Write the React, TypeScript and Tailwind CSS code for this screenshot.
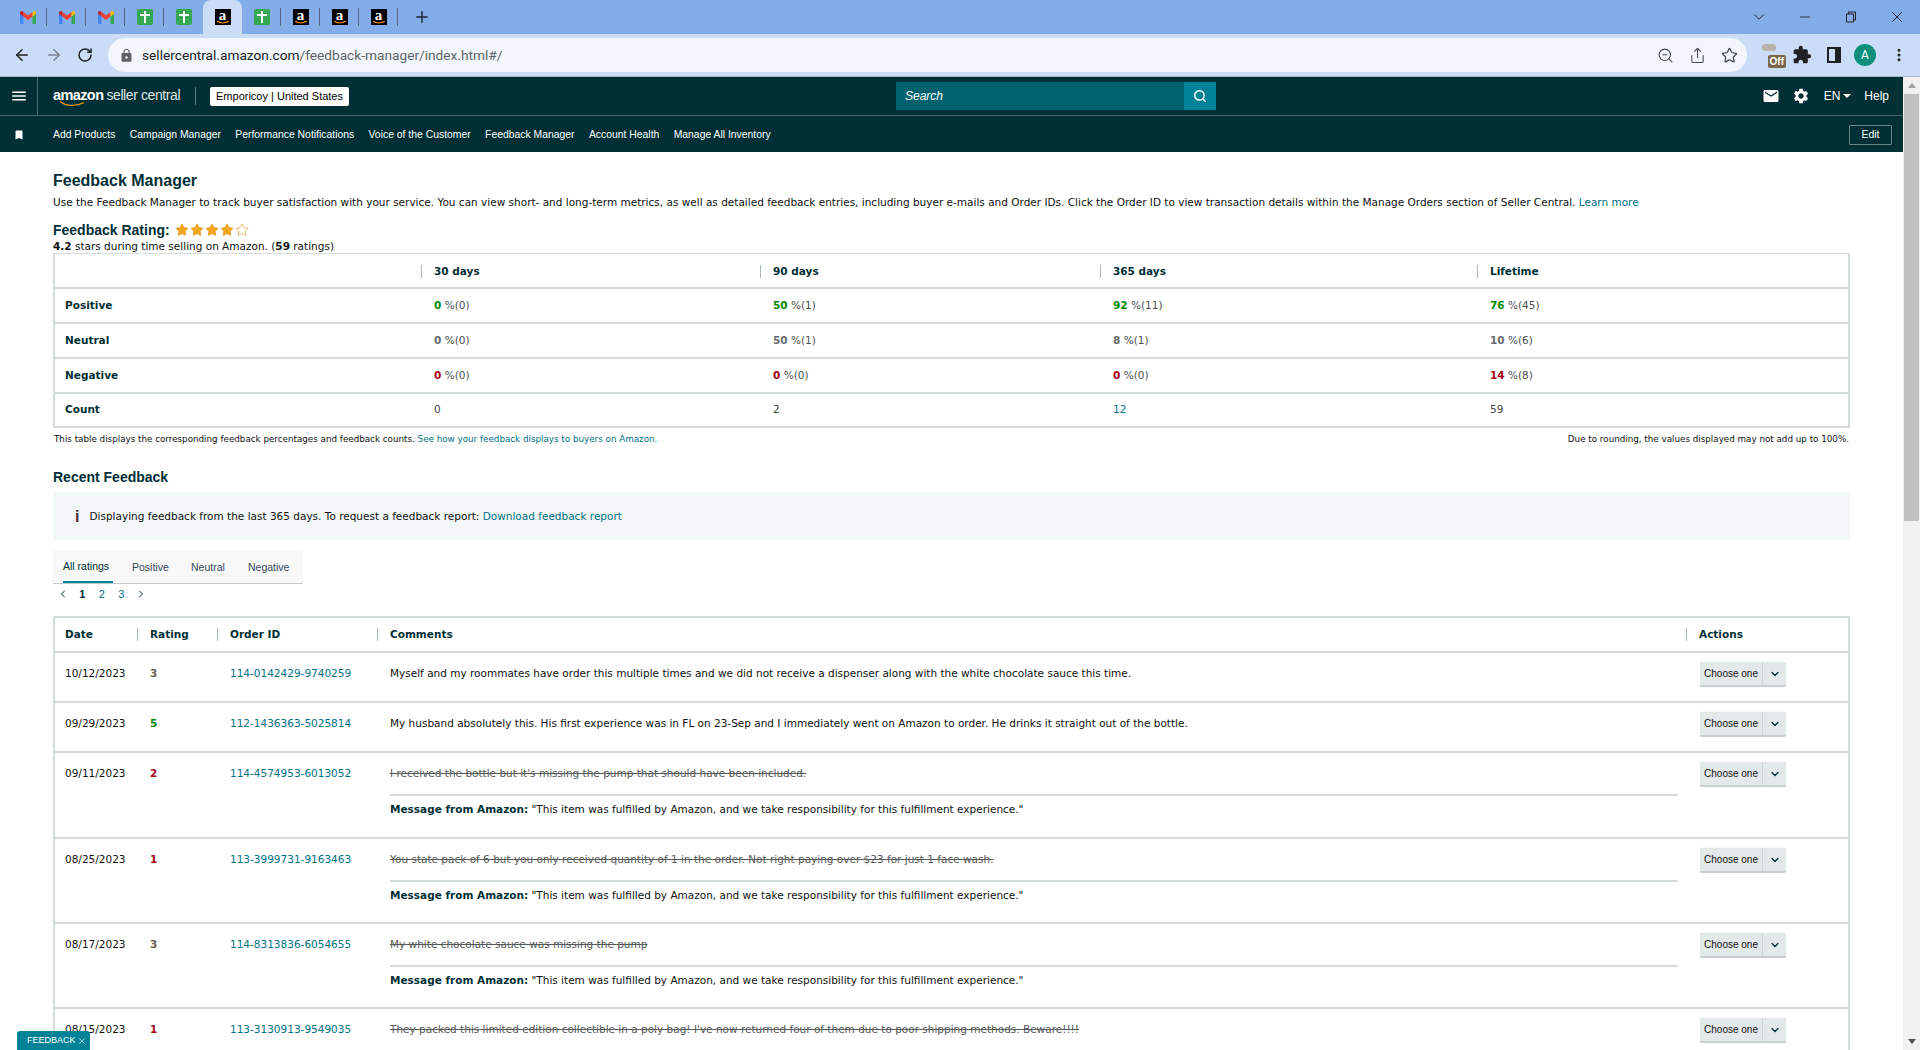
import { ArrowLeft, ArrowRight, RotateCw, ZoomOut, Share, Star, MoreVertical, Plus, ChevronDown, ChevronLeft, ChevronRight, Minus, X, Search } from "lucide-react";
import { MdBookmark, MdExtension, MdLock, MdMail, MdMenu, MdSettings } from "react-icons/md";

const body = "font-['DejaVu_Sans',Verdana,sans-serif]";
const arial = "font-['Liberation_Sans',Arial,sans-serif]";

const GMAIL = "gmail";
const SHEET = "sheet";
const AMZ = "amazon";

const tabs = [
  { icon: GMAIL, sep: true },
  { icon: GMAIL, sep: true },
  { icon: GMAIL, sep: true },
  { icon: SHEET, sep: true },
  { icon: SHEET, sep: false },
  { icon: AMZ, active: true, sep: false },
  { icon: SHEET, sep: true },
  { icon: AMZ, sep: true },
  { icon: AMZ, sep: true },
  { icon: AMZ, sep: true },
];

const navLinks = ["Add Products", "Campaign Manager", "Performance Notifications", "Voice of the Customer", "Feedback Manager", "Account Health", "Manage All Inventory"];

const summary = [
  { label: "Positive", color: "text-[#008a00]", cells: [["0", "(0)"], ["50", "(1)"], ["92", "(11)"], ["76", "(45)"]] },
  { label: "Neutral", color: "text-[#666b6b]", cells: [["0", "(0)"], ["50", "(1)"], ["8", "(1)"], ["10", "(6)"]] },
  { label: "Negative", color: "text-[#a4000f]", cells: [["0", "(0)"], ["0", "(0)"], ["0", "(0)"], ["14", "(8)"]] },
];

const msg = "\"This item was fulfilled by Amazon, and we take responsibility for this fulfillment experience.\"";

const feedback = [
  { date: "10/12/2023", rating: 3, order: "114-0142429-9740259", comment: "Myself and my roommates have order this multiple times and we did not receive a dispenser along with the white chocolate sauce this time." },
  { date: "09/29/2023", rating: 5, order: "112-1436363-5025814", comment: "My husband absolutely this. His first experience was in FL on 23-Sep and I immediately went on Amazon to order. He drinks it straight out of the bottle." },
  { date: "09/11/2023", rating: 2, order: "114-4574953-6013052", struck: true, tall: true, comment: "I received the bottle but it's missing the pump that should have been included." },
  { date: "08/25/2023", rating: 1, order: "113-3999731-9163463", struck: true, comment: "You state pack of 6 but you only received quantity of 1 in the order. Not right paying over $23 for just 1 face wash." },
  { date: "08/17/2023", rating: 3, order: "114-8313836-6054655", struck: true, comment: "My white chocolate sauce was missing the pump" },
  // the message of this row sits below the fold, only its rule shows
  { date: "08/15/2023", rating: 1, order: "113-3130913-9549035", struck: true, noMsg: true, comment: "They packed this limited edition collectible in a poly bag! I've now returned four of them due to poor shipping methods. Beware!!!!" },
];

function TabIcon({ icon }: { icon: string }) {
  if (icon === GMAIL) {
    return (
      <svg width="16" height="13" viewBox="0 0 16 13">
        <path d="M0 2v10a1 1 0 0 0 1 1h2.500V5.500z" fill="#4285f4" />
        <path d="M16 2v10a1 1 0 0 1-1 1h-2.500V5.500z" fill="#34a853" />
        <path d="M3.500 5.500L8 9l4.500-3.500V1L8 4.500 3.500 1z" fill="#ea4335" />
        <path d="M0 2c0-2 2.200-2.600 3.500-1v4.500L0 3z" fill="#c5221f" />
        <path d="M16 2c0-2-2.200-2.600-3.500-1v4.500L16 3z" fill="#fbbc04" />
      </svg>
    );
  }
  if (icon === SHEET) {
    return (
      <div className="relative w-4 h-4 bg-[#34a853] rounded-[2px]">
        <div className="absolute left-[7px] top-[2px] w-[2px] h-[12px] bg-white" />
        <div className="absolute left-[3px] top-[5px] w-[10px] h-[2px] bg-white" />
      </div>
    );
  }
  return (
    <div className="relative w-4 h-4 bg-black flex justify-center">
      <span className="font-['Liberation_Serif',serif] text-white font-bold text-[15px] leading-[13px]">a</span>
      <svg className="absolute left-[2px] bottom-[1px]" width="12" height="3" viewBox="0 0 12 3">
        <path d="M0 0c3 2.400 8 2.400 12 0" stroke="#f90" strokeWidth="1.200" fill="none" />
      </svg>
    </div>
  );
}

function ChromeBar() {
  return (
    <>
      <div className="h-[34px] bg-[#84ace9] flex items-center pl-[8px] shrink-0">
        {tabs.map((t, i) => (
          <div key={i} className={`relative w-[39px] h-[34px] flex items-center justify-center ${t.active ? "bg-[#cbdcf7] rounded-t-[8px]" : ""}`}>
            <TabIcon icon={t.icon} />
            {t.sep && <div className="absolute right-0 top-[8px] h-[18px] w-px bg-[#56667e]" />}
          </div>
        ))}
        <Plus className="ml-[15px] text-[#1f2937]" size={18} strokeWidth={2} />
        <div className="ml-auto flex items-center text-[#202124]">
          <div className="w-[46px] flex justify-center"><ChevronDown size={18} strokeWidth={1.25} /></div>
          <div className="w-[46px] flex justify-center"><Minus size={16} strokeWidth={1.25} /></div>
          <div className="w-[46px] flex justify-center">
            <svg width="12" height="12" viewBox="0 0 12 12" fill="none" stroke="#202124">
              <path d="M1.500 3h7v8h-7z" />
              <path d="M3.500 3V1h7v8h-2" />
            </svg>
          </div>
          <div className="w-[46px] flex justify-center"><X size={18} strokeWidth={1.25} /></div>
        </div>
      </div>
      <div className="h-[43px] bg-[#cbdcf7] flex items-center shrink-0 border-b border-[#a9b6cc]">
        <div className="flex items-center w-[108px] pl-[13px] gap-[14px]">
          <ArrowLeft size={18} className="text-[#202124]" strokeWidth={2} />
          <ArrowRight size={18} className="text-[#7b8494]" strokeWidth={2} />
          <RotateCw size={16} className="text-[#202124]" strokeWidth={2.250} />
        </div>
        <div className="w-[1639px] h-[34px] rounded-full bg-[#f3f7fd] flex items-center pl-[11px]">
          <MdLock size={15} className="text-[#5f6368] mr-[8px]" />
          <span className="font-['Roboto',sans-serif] text-[13.7px] text-[#202124]">
            sellercentral.amazon.com<span className="text-[#5f6368]">/feedback-manager/index.html#/</span>
          </span>
          <div className="ml-auto flex items-center gap-[15px] pr-[9px] text-[#44484f]">
            <ZoomOut size={17} strokeWidth={1.500} />
            <Share size={17} strokeWidth={1.500} />
            <Star size={17} strokeWidth={1.750} />
          </div>
        </div>
        <div className="flex items-center flex-1 pl-[15px]">
          <div className="relative w-[24px] h-[24px] mt-[2px]">
            <div className="absolute left-0 top-0 w-[14px] h-[7px] rounded-[3px] bg-[#b8b4aa]" />
            <div className="absolute right-0 bottom-0 bg-[#7a6547] text-white rounded-[2px] text-[10px] leading-[13px] font-bold px-[2px] font-['Liberation_Sans',sans-serif]">Off</div>
          </div>
          <MdExtension size={20} className="ml-[6px] text-[#202124]" />
          <div className="ml-[15px] w-[14px] h-[16px] border-[2px] border-[#202124] border-r-[6px]" />
          <div className="ml-[13px] w-[22px] h-[22px] rounded-full bg-[#0b8f7c] text-white text-[12px] flex items-center justify-center font-['Roboto',sans-serif]">A</div>
          <MoreVertical size={16} className="ml-[15px] text-[#202124]" strokeWidth={2.500} />
        </div>
      </div>
    </>
  );
}

function SellerHeader() {
  return (
    <div className={`${arial} bg-[#002f36] text-white shrink-0`}>
      <div className="h-[38px] flex items-center border-b border-[#4f6a6e] box-content relative">
        <div className="w-[38px] h-[38px] flex items-center justify-center border-r border-[#4f6a6e]">
          <MdMenu size={18} />
        </div>
        <div className="ml-[15px] w-[142px] flex items-baseline relative">
          <span className="font-bold text-[14.5px] tracking-[-0.6px]">amazon</span>
          <span className="ml-[3px] text-[14px] tracking-[-0.4px] text-[#dfe6e6]">seller central</span>
          <svg className="absolute left-[7px] top-[16px]" width="26" height="6" viewBox="0 0 26 6">
            <path d="M0 0.500c6 5 16 5 24 1" stroke="#f90" strokeWidth="1.300" fill="none" />
          </svg>
        </div>
        <div className="w-px h-[18px] bg-[#5e7a7e]" />
        <div className="ml-[14px] h-[19px] w-[139px] bg-white rounded-[2px] text-black text-[11px] flex items-center justify-center">Emporicoy | United States</div>
        <div className="absolute left-[896px] top-[5px] flex w-[320px] h-[28px]">
          <div className="flex-1 bg-[#00626f] text-[12px] italic flex items-center pl-[9px]">Search</div>
          <div className="w-[32px] bg-[#008296] flex items-center justify-center">
            <Search size={14} strokeWidth={2.500} />
          </div>
        </div>
        <div className="ml-auto flex items-center pr-[14px] text-[12px]">
          <MdMail size={18} />
          <MdSettings size={18} className="ml-[12px]" />
          <span className="ml-[14px]">EN</span>
          <div className="ml-[3px] w-0 h-0 border-l-[4px] border-r-[4px] border-t-[4px] border-l-transparent border-r-transparent border-t-white" />
          <span className="ml-[13px]">Help</span>
        </div>
      </div>
      <div className="h-[36px] pt-[2px] flex items-center text-[10.4px]">
        <div className="w-[38px] flex justify-center">
          <MdBookmark size={12} />
        </div>
        <div className="ml-[15px] flex gap-[14.3px]">
          {navLinks.map((n) => (
            <span key={n}>{n}</span>
          ))}
        </div>
        <div className="ml-auto mr-[11px] h-[20px] w-[43px] border border-[#6d8386] rounded-[1px] flex items-center justify-center">Edit</div>
      </div>
    </div>
  );
}

function Stars() {
  return (
    <div className="flex ml-[5px] gap-[1px]">
      {[0, 1, 2, 3, 4].map((i) => (
        <Star key={i} size={14} className={i < 4 ? "fill-[#f5a623] text-[#de8f0b]" : "text-[#de9f30]"} strokeWidth={1.250} />
      ))}
    </div>
  );
}

function SummaryTable() {
  const cols = "grid grid-cols-[366px_339px_340px_377px_1fr]";
  return (
    <div className="border-t border-[#d5dbdb] border-b-2 border-r-2 border-l-2 text-[#0f1111]">
      <div className={`${cols} h-[35px] pt-[2px] items-center border-b-2 border-[#d5dbdb] font-bold text-[#002f36]`}>
        <div />
        {["30 days", "90 days", "365 days", "Lifetime"].map((h) => (
          <div key={h} className="border-l border-[#aab7b8] h-[13px] pl-[12px] leading-[13px]">{h}</div>
        ))}
      </div>
      {summary.map((r) => (
        <div key={r.label} className={`${cols} h-[35px] items-center border-b-2 border-[#d5dbdb]`}>
          <div className="pl-[10px] font-bold text-[#002f36]">{r.label}</div>
          {r.cells.map((c, i) => (
            <div key={i} className="pl-[13px]">
              <span className={`font-bold ${r.color}`}>{c[0]}</span> <span className="text-[#4a4f4f]">%{c[1]}</span>
            </div>
          ))}
        </div>
      ))}
      <div className={`${cols} h-[32px] items-center`}>
        <div className="pl-[10px] font-bold text-[#002f36]">Count</div>
        <div className="pl-[13px] text-[#444]">0</div>
        <div className="pl-[13px] text-[#444]">2</div>
        <div className="pl-[13px] text-[#007185]">12</div>
        <div className="pl-[13px] text-[#444]">59</div>
      </div>
    </div>
  );
}

function ActionButton() {
  return (
    <div className={`${arial} flex w-[86px] h-[25px] bg-[#e3e9e9] rounded-[2px] border-b-2 border-[#c9cfcf] text-[10px] text-[#0f1111] shadow-[0_0_1px_rgba(0,0,0,0.2)]`}>
      <div className="w-[63px] flex items-center justify-center border-r border-[#cfd5d5]">Choose one</div>
      <div className="flex-1 flex items-center justify-center">
        <ChevronDown size={12} strokeWidth={2.500} className="text-[#002f36]" />
      </div>
    </div>
  );
}

function FeedbackTable() {
  const ratingColor = (r: number) => (r < 3 ? "text-[#a4000f]" : r === 3 ? "text-[#6b5d4d]" : "text-[#008a00]");
  const th = "border-l border-[#aab7b8] pl-[12px] text-left h-[13px] leading-[13px] font-bold";
  const cell = "border-b-2 border-[#d5dbdb] pt-[13px] leading-[14px]";
  return (
    <table className="table-fixed w-full border-t-2 border-l-2 border-r-2 border-[#d5dbdb] text-[#0f1111] border-separate border-spacing-0">
      <colgroup>
        <col className="w-[82px]" />
        <col className="w-[80px]" />
        <col className="w-[160px]" />
        <col className="w-[1309px]" />
        <col />
      </colgroup>
      <thead>
        <tr className="h-[35px] text-[#002f36]">
          <th className="border-b-2 border-[#d5dbdb] pl-[10px]"><div className="text-left h-[13px] leading-[13px] font-bold">Date</div></th>
          <th className="border-b-2 border-[#d5dbdb]"><div className={th}>Rating</div></th>
          <th className="border-b-2 border-[#d5dbdb]"><div className={th}>Order ID</div></th>
          <th className="border-b-2 border-[#d5dbdb]"><div className={th}>Comments</div></th>
          <th className="border-b-2 border-[#d5dbdb]"><div className={th}>Actions</div></th>
        </tr>
      </thead>
      <tbody>
        {feedback.map((f) => (
          <tr key={f.order} className="align-top">
            <td className={`${cell} pl-[10px]`}>{f.date}</td>
            <td className={`${cell} pl-[13px]`}><span className={`font-bold ${ratingColor(f.rating)}`}>{f.rating}</span></td>
            <td className={`${cell} pl-[13px] text-[#007185]`}>{f.order}</td>
            <td className={`${cell} pl-[13px] pr-[8px]`}>
              <div className={f.struck ? "h-[28px] line-through text-[#565959]" : "h-[35px]"}>{f.comment}</div>
              {f.struck && (
                <div className={`border-t-2 border-[#d5dbdb] pt-[6px] ${f.tall ? "h-[43px]" : "h-[42px]"}`}>
                  {!f.noMsg && (
                    <>
                      <span className="font-bold text-[#002f36]">Message from Amazon:</span> {msg}
                    </>
                  )}
                </div>
              )}
            </td>
            <td className="border-b-2 border-[#d5dbdb] pl-[14px] pt-[9px]">
              <ActionButton />
            </td>
          </tr>
        ))}
      </tbody>
    </table>
  );
}

function Scrollbar() {
  return (
    <div className="w-[17px] bg-[#f1f1f1] shrink-0 flex flex-col items-center">
      <div className="h-[17px] flex items-center justify-center">
        <div className="w-0 h-0 border-l-[4px] border-r-[4px] border-b-[5px] border-l-transparent border-r-transparent border-b-[#a3a3a3]" />
      </div>
      <div className="w-[15px] h-[427px] bg-[#c1c1c1]" />
      <div className="mt-auto h-[17px] flex items-center justify-center">
        <div className="w-0 h-0 border-l-[4px] border-r-[4px] border-t-[5px] border-l-transparent border-r-transparent border-t-[#505050]" />
      </div>
    </div>
  );
}

export default function App() {
  return (
    <div className="h-[1050px] w-[1920px] overflow-hidden flex flex-col bg-white relative">
      <ChromeBar />
      <div className="flex flex-1 min-h-0">
        <div className="flex-1 min-w-0 flex flex-col">
          <SellerHeader />
          <div className={`${body} flex-1 min-h-0 overflow-hidden pl-[53px] pr-[53px] text-[10.5px] text-[#0f1111]`}>
            <h1 className={`${arial} mt-[19px] text-[16px] leading-[20px] font-bold text-[#002f36]`}>Feedback Manager</h1>
            <p className="mt-[4px] leading-[14px] whitespace-nowrap">
              Use the Feedback Manager to track buyer satisfaction with your service. You can view short- and long-term metrics, as well as detailed feedback entries, including buyer e-mails and Order IDs. Click the Order ID to view transaction details within the Manage Orders section of Seller Central. <span className="text-[#007185]">Learn more</span>
            </p>
            <div className="mt-[13px] flex items-center h-[16px]">
              <span className={`${arial} text-[14px] font-bold text-[#002f36]`}>Feedback Rating:</span>
              <Stars />
            </div>
            <p className="leading-[14px] mt-[1px]"><b>4.2</b> stars during time selling on Amazon. (<b>59</b> ratings)</p>
            <SummaryTable />
            <div className="flex justify-between mt-[5px] text-[8.75px] leading-[12px] px-[1px]">
              <span>This table displays the corresponding feedback percentages and feedback counts. <span className="text-[#007185]">See how your feedback displays to buyers on Amazon.</span></span>
              <span>Due to rounding, the values displayed may not add up to 100%.</span>
            </div>
            <h2 className={`${arial} mt-[23px] text-[14px] leading-[18px] font-bold text-[#002f36]`}>Recent Feedback</h2>
            <div className="mt-[6px] h-[48px] pt-[2px] bg-[#f4f7f7] flex items-center pl-[22px]">
              <span className={`${arial} font-bold text-[#4a2b2b] text-[16px] mr-[10px]`}>i</span>
              <span>Displaying feedback from the last 365 days. To request a feedback report: <span className="text-[#007185]">Download feedback report</span></span>
            </div>
            <div className={`${arial} mt-[10px] w-[250px] h-[34px] bg-[#f8f8f8] border-b border-[#c5cccc] flex text-[10.5px] pl-[10px] text-[#37475a]`}>
              <div className="h-[33px] pt-[2px] w-[50px] mr-[19px] flex items-center border-b-2 border-[#008296] text-[#002f36]">All ratings</div>
              <div className="h-[33px] pt-[2px] w-[59px] flex items-center">Positive</div>
              <div className="h-[33px] pt-[2px] w-[57px] flex items-center">Neutral</div>
              <div className="h-[33px] pt-[2px] flex items-center">Negative</div>
            </div>
            <div className={`${arial} h-[20px] flex items-center text-[11px] text-[#007185]`}>
              <div className="w-[19.5px] flex justify-center"><ChevronLeft size={12} className="text-[#002f36]" strokeWidth={2} /></div>
              <div className="w-[19.5px] flex justify-center text-[#002f36] font-bold">1</div>
              <div className="w-[19.5px] flex justify-center">2</div>
              <div className="w-[19.5px] flex justify-center">3</div>
              <div className="w-[19.5px] flex justify-center"><ChevronRight size={12} className="text-[#002f36]" strokeWidth={2} /></div>
            </div>
            <div className="mt-[12px]">
              <FeedbackTable />
            </div>
          </div>
        </div>
        <Scrollbar />
      </div>
      <div className={`${arial} absolute left-[17px] bottom-0 w-[73px] h-[19px] pl-[10px] bg-[#008296] rounded-t-[3px] text-white text-[9px] flex items-center gap-[1px]`}>
        FEEDBACK <X size={10} strokeWidth={1.500} />
      </div>
    </div>
  );
}
